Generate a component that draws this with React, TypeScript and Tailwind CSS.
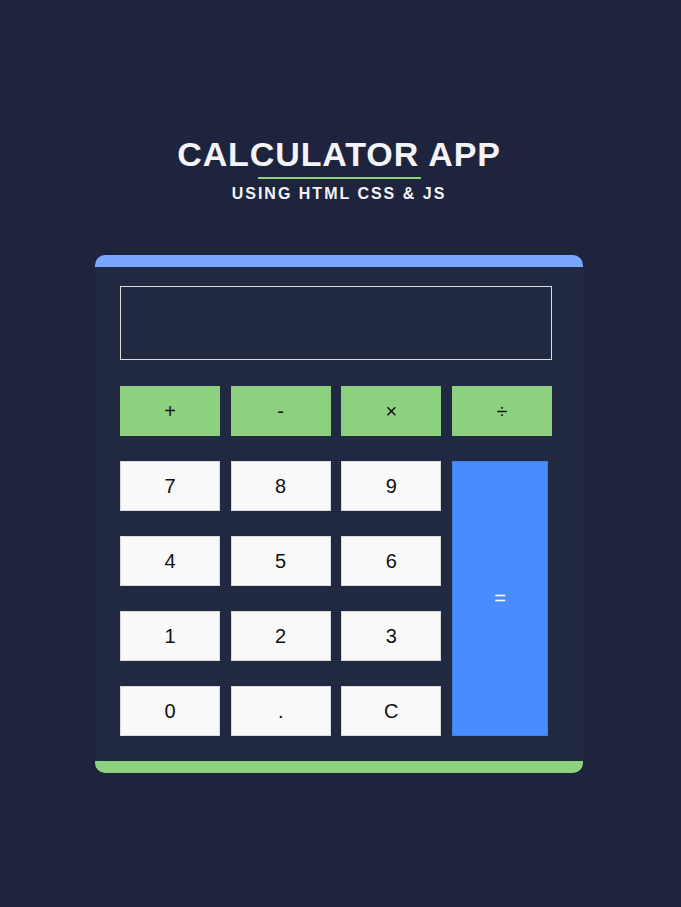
import React, { useState } from "react";

const operators = ["+", "-", "×", "÷"];
const digits = ["7", "8", "9", "4", "5", "6", "1", "2", "3", "0", ".", "C"];

const App = () => {
  const [display, setDisplay] = useState("");

  const press = (key: string) => {
    if (key === "C") {
      setDisplay("");
      return;
    }
    setDisplay((prev) => prev + key);
  };

  const calculate = () => {
    try {
      const expr = display.replace(/×/g, "*").replace(/÷/g, "/");
      // eslint-disable-next-line no-new-func
      const result = Function(`"use strict"; return (${expr})`)();
      setDisplay(String(result));
    } catch (e) {
      setDisplay("Error");
    }
  };

  return (
    <div className="min-h-[907px] bg-[#1e243d] pr-[3px] font-['Liberation_Sans',Arial,sans-serif]">
      <div className="flex flex-col items-center pt-[134px]">
        <h1 className="text-[34px] leading-[40px] font-bold tracking-[0.9px] text-[#f4f4f6]">
          CALCULATOR APP
        </h1>
        <div className="mt-[3px] h-[2px] w-[163px] bg-[#8dd17e]" />
        <h2 className="mt-[5px] text-[16px] leading-[20px] font-bold tracking-[2px] text-[#f4f4f6]">
          USING HTML CSS &amp; JS
        </h2>

        <div className="mt-[51px] w-[488px] overflow-hidden rounded-[10px] bg-[#212842]">
          <div className="h-[12px] bg-[#79a6ff]" />
          <div className="pt-[19px] pr-[31px] pb-[25px] pl-[25px]">
            <div className="flex h-[74px] w-[432px] items-center justify-end border border-[#dcdcdc] px-3 text-[28px] text-white">
              {display}
            </div>

            <div className="mt-[26px] grid w-[432px] grid-cols-[100px_100px_100px_100px] grid-rows-[50px_50px_50px_50px_50px] justify-between gap-y-[25px]">
              {operators.map((op) => (
                <button
                  key={op}
                  onClick={() => press(op)}
                  className="bg-[#8dd17e] pb-[1px] text-[20px] text-[#111]"
                >
                  {op}
                </button>
              ))}

              {digits.map((d, i) => (
                <button
                  key={d}
                  onClick={() => press(d)}
                  className="border border-[#dadada] bg-[#f9f9f9] pb-[1px] text-[20px] text-[#111]"
                  style={{ gridColumn: (i % 3) + 1, gridRow: Math.floor(i / 3) + 2 }}
                >
                  {d}
                </button>
              ))}

              <button
                onClick={calculate}
                className="col-start-4 row-start-2 row-span-4 w-[96px] justify-self-start border border-[#3f7ee6] bg-[#4a8cff] pb-[1px] text-[20px] text-white"
              >
                =
              </button>
            </div>
          </div>
          <div className="h-[12px] bg-[#8dd17e]" />
        </div>
      </div>
    </div>
  );
};

export default App;
